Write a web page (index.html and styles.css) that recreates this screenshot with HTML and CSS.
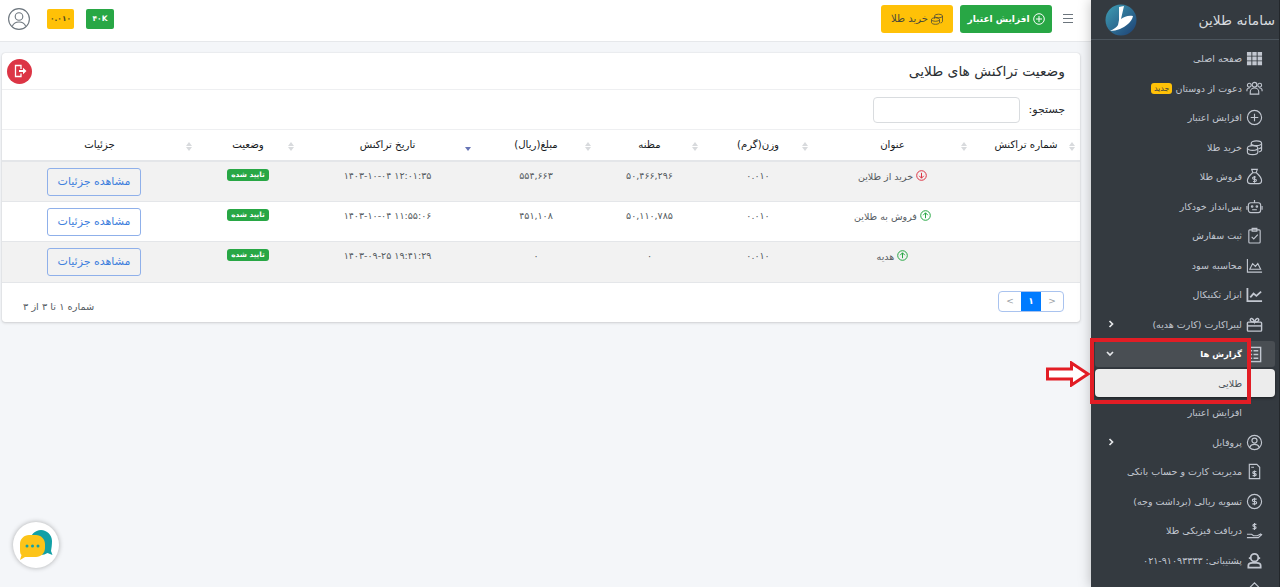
FILE: index.html
```html
<!DOCTYPE html>
<html lang="fa" dir="rtl">
<head>
    <meta charset="UTF-8">
    <title>وضعیت تراکنش های طلایی</title>
    <link rel="stylesheet" href="styles.css">
</head>
<body>
<div class="app">
    <aside class="sidebar">
        <div class="brand">
            <span class="brand-name">سامانه طلاین</span>
            <svg class="brand-logo" viewBox="0 0 32 32">
                <defs><linearGradient id="logoFill" x1="0" y1="0" x2="1" y2="1"><stop offset="0" stop-color="#3f9fb5"/><stop offset="1" stop-color="#1d3f73"/></linearGradient></defs>
                <circle cx="16" cy="16" r="15.5" fill="url(#logoFill)"/>
                <path d="M14 3l5-1-3 13c3-2 7-4 12-3-1 6-8 11-13 13-3 1-7 2-10 2 4-2 7-4 8-6l1-5z" fill="#fff"/>
            </svg>
        </div>
        <nav class="menu">
            <a class="item"><svg class="ico" viewBox="0 0 18 18"><path fill="currentColor" d="M1 2h4.7v4.2H1zM6.700 2h4.600v4.200H6.700zM12.300 2H17v4.200h-4.700zM1 7h4.700v4.200H1zM6.700 7h4.600v4.200H6.700zM12.300 7H17v4.200h-4.700zM1 12h4.700v4.200H1zM6.700 12h4.600v4.200H6.700zM12.300 12H17v4.200h-4.700z"/></svg><span>صفحه اصلی</span></a>
            <a class="item"><svg class="ico line" viewBox="0 0 18 18"><circle cx="9" cy="5" r="2.500"/><circle cx="3.500" cy="5.500" r="2"/><circle cx="14.500" cy="5.500" r="2"/><path d="M4.500 15v-2.500a4.500 4 0 0 1 9 0V15zM1 12v-1.500a2.500 2.500 0 0 1 3-2M17 12v-1.500a2.500 2.500 0 0 0-3-2"/></svg><span>دعوت از دوستان</span><b class="tag-new">جدید</b></a>
            <a class="item"><svg class="ico line" viewBox="0 0 18 18"><circle cx="9" cy="9" r="7.500"/><path d="M9 5v8M5 9h8"/></svg><span>افزایش اعتبار</span></a>
            <a class="item"><svg class="ico line" viewBox="0 0 18 18"><ellipse cx="11" cy="4.500" rx="5.500" ry="2.500"/><path d="M16.500 4.500v7c0 1-1 2-3 2.300M5.500 5v2.500M16.500 8c0 1-1 2-3 2.300"/><ellipse cx="7" cy="9.500" rx="5.500" ry="2.500"/><path d="M1.500 9.500v4.500c0 1.400 2.500 2.500 5.500 2.500s5.500-1.100 5.500-2.500V9.500"/></svg><span>خرید طلا</span></a>
            <a class="item"><svg class="ico line" viewBox="0 0 18 18"><path d="M6 1.500h6L10.700 5H7.300zM7 5C3.500 8 1.500 11 1.500 13.500c0 2 1 3 3 3h9c2 0 3-1 3-3C16.500 11 14.500 8 11 5z"/><path d="M10.500 9.500H8.200a1 1 0 0 0 0 2.400h1.600a1 1 0 0 1 0 2.400H7.500M9 8.500v7"/></svg><span>فروش طلا</span></a>
            <a class="item"><svg class="ico line" viewBox="0 0 18 18"><rect x="2.500" y="5" width="13" height="10.500" rx="2.500"/><path d="M9 5V2M1 8.500v4M17 8.500v4M6.500 12.500h5"/><circle cx="6.500" cy="9" r=".8"/><circle cx="11.500" cy="9" r=".8"/></svg><span>پس‌انداز خودکار</span></a>
            <a class="item"><svg class="ico line" viewBox="0 0 18 18"><rect x="3" y="3" width="12" height="14" rx="1"/><path d="M6.500 1.500h5v3h-5zM6 10.500l2.200 2.200L12.500 8"/></svg><span>ثبت سفارش</span></a>
            <a class="item"><svg class="ico line" viewBox="0 0 18 18"><path d="M1.500 2v14h15.500M4 13l3-6 3 3 2.500-3 3 6z"/></svg><span>محاسبه سود</span></a>
            <a class="item"><svg class="ico line thick" viewBox="0 0 18 18"><path d="M1.500 2v14h15.500M4.500 12l3.500-4 3 2.500 5-4.500"/></svg><span>ابزار تکنیکال</span></a>
            <a class="item"><svg class="ico line medium" viewBox="0 0 18 18"><rect x="1.500" y="6.500" width="15" height="9.500" rx="1"/><path d="M1.500 10.500h15"/><path d="M9 6.500C7 6.500 4.500 6 4.500 4s3-2.500 4.500 2.500C10.500 1.500 13.500 2 13.500 4s-2.500 2.500-4.500 2.500z"/></svg><span>لیبراکارت (کارت هدیه)</span><svg class="chev" viewBox="0 0 6 8"><path d="M1.500 1l3 3-3 3"/></svg></a>
            <a class="item active"><svg class="ico line medium" viewBox="0 0 18 18"><rect x="2.500" y="1.500" width="13" height="15"/><path d="M8 5h5M8 9h5M8 13h5M5 5h1.500M5 9h1.500M5 13h1.500"/></svg><span>گزارش ها</span><svg class="chev-down" viewBox="0 0 8 6"><path d="M1 1l3 3 3-3"/></svg></a>
            <a class="item sub current"><span>طلایی</span></a>
            <a class="item sub"><span>افزایش اعتبار</span></a>
            <a class="item"><svg class="ico line" viewBox="0 0 18 18"><circle cx="9" cy="9" r="7.500"/><circle cx="9" cy="7" r="2.700"/><path d="M4 14c1-2.500 3-3 5-3s4 .5 5 3"/></svg><span>پروفایل</span><svg class="chev" viewBox="0 0 6 8"><path d="M1.500 1l3 3-3 3"/></svg></a>
            <a class="item"><svg class="ico line" viewBox="0 0 18 18"><path d="M3.500 1.500h8l3 3v12h-11zM5.500 4.500h3"/><path d="M11 9H8.300a1 1 0 0 0 0 2.200h1.400a1 1 0 0 1 0 2.200H7M9 8v6.500"/></svg><span>مدیریت کارت و حساب بانکی</span></a>
            <a class="item"><svg class="ico line" viewBox="0 0 18 18"><circle cx="9" cy="9" r="7.500"/><path d="M11.300 6.500H8a1.200 1.200 0 0 0 0 2.500h2a1.200 1.200 0 0 1 0 2.500H6.700M9 5v8"/></svg><span>تسویه ریالی (برداشت وجه)</span></a>
            <a class="item"><svg class="ico line" viewBox="0 0 18 18"><path d="M1 13h5l2 1.500h4l4-2M1 16.500h12l4-3.500"/><path d="M11 2.500H8.500a1 1 0 0 0 0 2.300h1a1 1 0 0 1 0 2.300H7M9 1v7.500"/></svg><span>دریافت فیزیکی طلا</span></a>
            <a class="item"><svg class="ico line thick" viewBox="0 0 18 18"><circle cx="9" cy="6" r="4"/><path d="M2.500 16.500v-2c0-2 2-3 4-3h5c2 0 4 1 4 3v2zM3 6.500h2M13 6.500h2"/></svg><span>پشتیبانی: <bdi dir="ltr">۰۲۱-۹۱۰۹۳۳۳۳</bdi></span></a>
            <a class="item"><svg class="ico line" viewBox="0 0 18 18"><path d="M3 8l6-6 6 6v8H3z"/></svg></a>
        </nav>
    </aside>

    <main class="content">
        <header class="topbar">
            <svg class="burger" viewBox="0 0 10 9"><path d="M0 .5h10M0 4.500h10M0 8.500h10" stroke="#6c757d" stroke-width="1"/></svg>
            <a class="btn btn-green"><svg class="btn-ico" viewBox="0 0 12 12"><circle cx="6" cy="6" r="5.300" fill="none" stroke="currentColor"/><path d="M6 3v6M3 6h6" stroke="currentColor"/></svg>افزایش اعتبار</a>
            <a class="btn btn-yellow"><svg class="btn-ico" viewBox="0 0 12 12" fill="none" stroke="currentColor" stroke-width=".8"><ellipse cx="7.500" cy="3" rx="4" ry="1.800"/><path d="M11.500 3v5.500c0 .6-.8 1.200-2 1.400M3.500 3.500v2"/><ellipse cx="4.500" cy="6.500" rx="4" ry="1.800"/><path d="M.5 6.500v3c0 1 1.800 1.800 4 1.800s4-.8 4-1.800v-3"/></svg>خرید طلا</a>
            <div class="top-left">
                <span class="chip chip-green">۴۰K</span>
                <span class="chip chip-yellow">۰.۰۱۰</span>
                <svg class="avatar" viewBox="0 0 22 22" fill="none" stroke="#6c757d" stroke-width="1.100"><circle cx="11" cy="11" r="10.400"/><circle cx="11" cy="8.500" r="3.800"/><path d="M4.300 18.300c1-3 3.500-4.300 6.700-4.300s5.700 1.300 6.700 4.300"/></svg>
            </div>
        </header>

        <section class="card">
            <div class="card-head">
                <h1>وضعیت تراکنش های طلایی</h1>
                <a class="exit"><svg viewBox="0 0 14 14" fill="none" stroke="#fff" stroke-width="1.300"><path d="M8 5V1.500H2.500v11H8V9.500"/><path fill="#fff" stroke="none" d="M6 6h4V3.800L13.500 7 10 10.200V8H6z"/></svg></a>
            </div>
            <div class="search-row">
                <label for="search">جستجو:</label>
                <input id="search" type="text">
            </div>
            <table class="grid">
                <colgroup>
                    <col class="c1"><col class="c2"><col class="c3"><col class="c4"><col class="c5"><col class="c6"><col class="c7"><col class="c8">
                </colgroup>
                <thead>
                    <tr>
                        <th>شماره تراکنش</th>
                        <th>عنوان</th>
                        <th>وزن(گرم)</th>
                        <th>مظنه</th>
                        <th>مبلغ(ریال)</th>
                        <th class="sorted">تاریخ تراکنش</th>
                        <th>وضعیت</th>
                        <th>جزئیات</th>
                    </tr>
                </thead>
                <tbody>
                    <tr>
                        <td></td>
                        <td><svg class="dir down" viewBox="0 0 11 11"><circle cx="5.500" cy="5.500" r="4.800"/><path d="M5.500 2.800v5.400M3.200 5.800l2.300 2.400 2.300-2.400"/></svg> خرید از طلاین</td>
                        <td>۰.۰۱۰</td>
                        <td>۵۰,۴۶۶,۲۹۶</td>
                        <td>۵۵۴,۶۶۳</td>
                        <td dir="ltr">۱۴۰۳-۱۰-۰۴ ۱۲:۰۱:۳۵</td>
                        <td><span class="status">تایید شده</span></td>
                        <td><a class="details">مشاهده جزئیات</a></td>
                    </tr>
                    <tr>
                        <td></td>
                        <td><svg class="dir up" viewBox="0 0 11 11"><circle cx="5.500" cy="5.500" r="4.800"/><path d="M5.500 8.200V2.800M3.200 5.200l2.300-2.400 2.300 2.400"/></svg> فروش به طلاین</td>
                        <td>۰.۰۱۰</td>
                        <td>۵۰,۱۱۰,۷۸۵</td>
                        <td>۴۵۱,۱۰۸</td>
                        <td dir="ltr">۱۴۰۳-۱۰-۰۴ ۱۱:۵۵:۰۶</td>
                        <td><span class="status">تایید شده</span></td>
                        <td><a class="details">مشاهده جزئیات</a></td>
                    </tr>
                    <tr>
                        <td></td>
                        <td><svg class="dir up" viewBox="0 0 11 11"><circle cx="5.500" cy="5.500" r="4.800"/><path d="M5.500 8.200V2.800M3.200 5.200l2.300-2.400 2.300 2.400"/></svg> هدیه</td>
                        <td>۰.۰۱۰</td>
                        <td>۰</td>
                        <td>۰</td>
                        <td dir="ltr">۱۴۰۳-۰۹-۲۵ ۱۹:۴۱:۲۹</td>
                        <td><span class="status">تایید شده</span></td>
                        <td><a class="details">مشاهده جزئیات</a></td>
                    </tr>
                </tbody>
            </table>
            <div class="card-foot">
                <div class="pager" dir="ltr">
                    <a>&lt;</a>
                    <a class="on">۱</a>
                    <a>&gt;</a>
                </div>
                <span class="count">شماره ۱ تا ۳ از ۳</span>
            </div>
        </section>
    </main>
</div>

<!-- highlight drawn over the menu -->
<div class="mark-box"></div>
<svg class="mark-arrow" viewBox="0 0 44 26"><path d="M1.500 8h24V2L42 13 25.500 24v-6h-24z" fill="#fff" stroke="#e21d25" stroke-width="3"/></svg>

<div class="chat">
    <svg viewBox="0 0 34 32">
        <path d="M22 1c6 0 11 5 11 11 0 4-.5 7-1 10l1.500 4-5-2c-2 1-4 2-6.500 2-6 0-11-4-11-11V12C11 6 16 1 22 1z" fill="#12a0a6"/>
        <path d="M10 6h7c5 0 9 4 9 9v4c0 5-4 9-9 9H6l-5 3 1.500-5C1 25 1 22 1 19v-4c0-5 4-9 9-9z" fill="#fcc419"/>
        <circle cx="8" cy="17" r="1.500" fill="#12a0a6"/><circle cx="13.500" cy="17" r="1.500" fill="#12a0a6"/><circle cx="19" cy="17" r="1.500" fill="#12a0a6"/>
    </svg>
</div>
</body>
</html>
```

FILE: styles.css
```css
* {
    box-sizing: border-box;
}
html, body {
    height: 100%;
}
body {
    margin: 0;
    overflow: hidden;
    font-family: "DejaVu Sans", "Noto Sans", sans-serif;
    font-size: 10px;
    color: #212529;
    background-color: #f4f6f9;
}
.app {
    display: flex;
    height: 587px;
}

/* sidebar */
.sidebar {
    flex: 0 0 189px;
    height: 100%;
    overflow: hidden;
    background-color: #343a40;
    border-right: 1px solid #23272b;
    color: #c2c7d0;
    box-shadow: 0 0 12px rgba(0, 0, 0, 0.25);
    position: relative;
    z-index: 1;
}
.brand {
    display: flex;
    align-items: center;
    justify-content: space-between;
    height: 40px;
    padding: 0 4px 0 14px;
    border-bottom: 1px solid #4b545c;
}
.brand-name {
    font-size: 13.8px;
    color: #d7dadf;
    white-space: nowrap;
}
.brand-logo {
    width: 32px;
    height: 32px;
    flex: none;
}
.menu {
    padding-top: 4px;
}
.item {
    display: flex;
    align-items: center;
    gap: 4px;
    height: 29.5px;
    padding: 0 16px;
    font-size: 9.5px;
    white-space: nowrap;
}
.ico {
    width: 17px;
    height: 17px;
    flex: none;
    color: #c2c7d0;
}
.line {
    fill: none;
    stroke: #c2c7d0;
    stroke-width: 1.2;
}
.medium {
    stroke-width: 1.5;
}
.thick {
    stroke-width: 1.9;
}
.tag-new {
    margin-right: -1px;
    padding: 1px 3px;
    border-radius: 3px;
    background-color: #ffc107;
    color: #343a40;
    font-size: 8px;
    font-weight: normal;
}
.chev {
    width: 6px;
    height: 8px;
    margin-right: auto;
    margin-left: 1px;
    fill: none;
    stroke: #e4e6e9;
    stroke-width: 1.7;
}
.chev-down {
    width: 8px;
    height: 6px;
    margin-right: auto;
    fill: none;
    stroke: #e4e6e9;
    stroke-width: 1.7;
}
.item.active {
    height: 26px;
    margin: 2px 4px 2px 4px;
    padding: 0 12px 0 11px;
    border-radius: 3px;
    background-color: #494e53;
    color: #fff;
    font-size: 8.5px;
    font-weight: bold;
}
.item.sub {
    padding-right: 37px;
}
.item.current {
    height: 28px;
    margin: 1px 4px 1px;
    padding-right: 33px;
    border-radius: 4px;
    background-color: #ececec;
    color: #495057;
    box-shadow: 0 1px 3px rgba(0, 0, 0, 0.5);
}

/* main */
.content {
    flex: 1;
    min-width: 0;
}
.topbar {
    display: flex;
    align-items: center;
    gap: 7px;
    height: 42px;
    padding: 0 18px 4px 8px;
    background-color: #fff;
    border-bottom: 1px solid #e6e8eb;
}
.burger {
    width: 10px;
    height: 9px;
    margin-left: 4px;
}
.btn {
    display: flex;
    align-items: center;
    justify-content: center;
    gap: 3px;
    height: 28px;
    border-radius: 3px;
    font-size: 10px;
    white-space: nowrap;
}
.btn-green {
    width: 92px;
    background-color: #28a745;
    color: #fff;
    font-weight: bold;
    font-size: 9px;
}
.btn-yellow {
    width: 72px;
    background-color: #ffc107;
    color: #4a4a3a;
}
.btn-ico {
    width: 12px;
    height: 12px;
    flex: none;
}
.top-left {
    display: flex;
    align-items: center;
    margin-right: auto;
}
.chip {
    display: flex;
    align-items: center;
    justify-content: center;
    height: 20px;
    border-radius: 2px;
    font-size: 7.5px;
    font-weight: bold;
}
.chip-green {
    width: 28px;
    margin-left: 12px;
    background-color: #28a745;
    color: #fff;
}
.chip-yellow {
    width: 27px;
    margin-left: 17px;
    background-color: #ffc107;
    color: #4d4a20;
}
.avatar {
    width: 22px;
    height: 22px;
}

/* card */
.card {
    margin: 11px 11px 0 2px;
    background-color: #fff;
    border-radius: 3px;
    box-shadow: 0 0 1px rgba(0, 0, 0, 0.2), 0 1px 3px rgba(0, 0, 0, 0.15);
}
.card-head {
    display: flex;
    align-items: center;
    justify-content: space-between;
    height: 37px;
    padding: 0 15px 0 5px;
    border-bottom: 1px solid #eeeff1;
}
.card-head h1 {
    margin: 0;
    font-size: 13.8px;
    font-weight: normal;
    color: #2b2f33;
}
.exit {
    display: flex;
    align-items: center;
    justify-content: center;
    width: 25px;
    height: 25px;
    border-radius: 50%;
    background-color: #dc3545;
}
.exit svg {
    width: 14px;
    height: 14px;
}
.search-row {
    display: flex;
    align-items: center;
    gap: 9px;
    height: 39px;
    padding: 0 15px;
    font-size: 11px;
}
.search-row input {
    width: 147px;
    height: 26px;
    border: 1px solid #d9dcdf;
    border-radius: 4px;
    background: #fff;
}
.grid {
    width: 100%;
    border-collapse: collapse;
    table-layout: fixed;
}
.c1 { width: 108px; }
.c2 { width: 159px; }
.c3 { width: 110px; }
.c4 { width: 107px; }
.c5 { width: 120px; }
.c6 { width: 177px; }
.c7 { width: 102px; }
.c8 { width: 195px; }
.grid th {
    position: relative;
    height: 31px;
    padding: 0;
    border-top: 1px solid #eeeff1;
    border-bottom: 2px solid #e4e6e9;
    font-size: 10.2px;
    font-weight: normal;
    color: #16191c;
}
/* sort arrows */
.grid th::before,
.grid th::after {
    content: "";
    position: absolute;
    right: 5px;
    border-left: 3px solid transparent;
    border-right: 3px solid transparent;
}
.grid th::before {
    top: 12px;
    border-bottom: 4px solid #d8dadd;
}
.grid th::after {
    top: 17px;
    border-top: 4px solid #d8dadd;
}
.grid th.sorted::before {
    display: none;
}
.grid th.sorted::after {
    top: 17px;
    border-top-color: #6674b5;
}
.grid td {
    height: 40px;
    padding: 8px 0 0;
    border-bottom: 1px solid #e4e6e9;
    font-size: 9.5px;
    color: #555b61;
    text-align: center;
    vertical-align: top;
}
.grid tbody tr:first-child td,
.grid tbody tr:last-child td {
    height: 41px;
}
.grid tbody tr:nth-child(odd) {
    background-color: #f2f2f2;
}
.dir {
    width: 11px;
    height: 11px;
    vertical-align: -1px;
    fill: none;
    stroke-width: 1;
}
.down {
    stroke: #dc3545;
}
.up {
    stroke: #28a745;
}
.status {
    display: inline-block;
    margin-top: -1px;
    padding: 1px 4px 2px;
    border-radius: 3px;
    background-color: #28a745;
    color: #fff;
    font-size: 7.3px;
    font-weight: bold;
    line-height: 9px;
    vertical-align: top;
}
.details {
    display: block;
    width: 94px;
    height: 28px;
    margin: -2px auto 0 45px;
    border: 1px solid #8fb0ea;
    border-radius: 3px;
    color: #3f7fdd;
    font-size: 11px;
    line-height: 25px;
}
.card-foot {
    display: flex;
    align-items: flex-start;
    justify-content: space-between;
    height: 39px;
    padding: 8px 16px 0 21px;
}
.pager {
    display: flex;
    height: 21px;
    border: 1px solid #a9c3ef;
    border-radius: 4px;
    overflow: hidden;
    color: #9aa0a6;
    font-size: 9px;
}
.pager a {
    width: 22px;
    text-align: center;
    line-height: 19px;
}
.pager .on {
    width: 20px;
    background-color: #007bff;
    color: #fff;
    font-weight: bold;
}
.count {
    margin-top: 10px;
    font-size: 9.8px;
    color: #555b61;
}

/* overlays */
.mark-box {
    position: absolute;
    left: 1090px;
    top: 338px;
    width: 161px;
    height: 66px;
    border: 4px solid #e21d25;
    z-index: 2;
}
.mark-arrow {
    position: absolute;
    left: 1046px;
    top: 361px;
    width: 44px;
    height: 26px;
    z-index: 2;
}
.chat {
    position: absolute;
    left: 13px;
    top: 522px;
    display: flex;
    align-items: center;
    justify-content: center;
    width: 46px;
    height: 46px;
    border-radius: 50%;
    background-color: #fff;
    box-shadow: 0 0 5px rgba(0, 0, 0, 0.3);
}
.chat svg {
    width: 34px;
    height: 32px;
}
```
